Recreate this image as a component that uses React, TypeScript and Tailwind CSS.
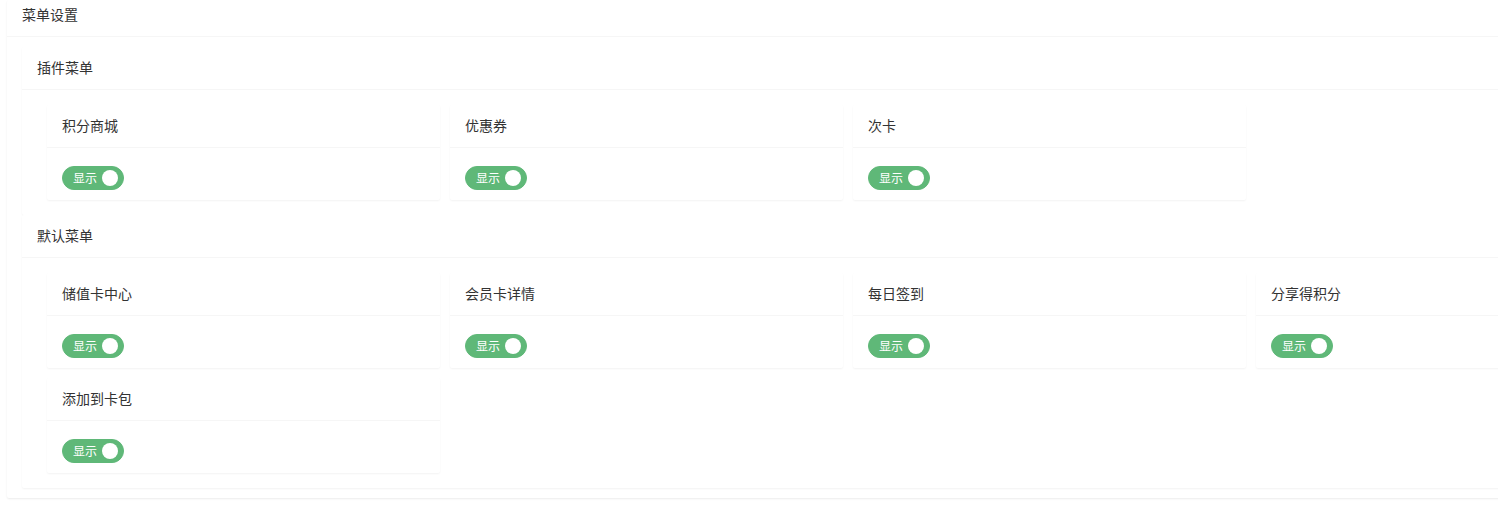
import React from "react";

type Item = { name: string };

const pluginMenus: Item[] = [
  { name: "积分商城" },
  { name: "优惠券" },
  { name: "次卡" },
];

const defaultMenus: Item[] = [
  { name: "储值卡中心" },
  { name: "会员卡详情" },
  { name: "每日签到" },
  { name: "分享得积分" },
  { name: "添加到卡包" },
];

const Switch: React.FC = () => (
  <div className="relative mt-[8px] h-[24px] w-[62px] rounded-[20px] border border-[#5FB878] bg-[#5FB878]">
    <em className="ml-[10px] block text-[12px] not-italic leading-[21px] text-white">显示</em>
    <i className="absolute top-[3px] left-[39px] h-[16px] w-[16px] rounded-full bg-white" />
  </div>
);

const MenuCard: React.FC<{ item: Item }> = ({ item }) => (
  <div className="rounded-[2px] bg-white shadow-[0_1px_2px_0_rgba(0,0,0,0.05)]">
    <div className="h-[43px] border-b border-[#f6f6f6] px-[15px] leading-[40px] text-[14px] text-[#333]">
      {item.name}
    </div>
    <div className="px-[15px] pt-[10px] pb-[10px]">
      <Switch />
    </div>
  </div>
);

const Section: React.FC<{ title: string; items: Item[] }> = ({ title, items }) => (
  <div className="rounded-[2px] bg-white shadow-[0_1px_2px_0_rgba(0,0,0,0.05)]">
    <div className="h-[43px] border-b border-[#f6f6f6] px-[15px] leading-[40px] text-[14px] text-[#333]">
      {title}
    </div>
    <div className="grid grid-cols-[repeat(4,393px)] gap-[10px] pt-[15px] pb-[15px] pl-[25px]">
      {items.map((item) => (
        <MenuCard key={item.name} item={item} />
      ))}
    </div>
  </div>
);

export default function App() {
  return (
    <div
      className="h-[517px] w-[1498px] overflow-hidden bg-white"
      style={{ fontFamily: '"Noto Sans CJK SC", "Noto Sans", sans-serif' }}
    >
      <div className="ml-[7px] w-[1720px] rounded-[2px] bg-white shadow-[0_1px_2px_0_rgba(0,0,0,0.08)]">
        <div className="h-[37px] border-b border-[#f6f6f6] px-[15px] leading-[28px] text-[14px] text-[#333]">
          菜单设置
        </div>
        <div className="px-[15px] py-[10px]">
          <Section title="插件菜单" items={pluginMenus} />
          <Section title="默认菜单" items={defaultMenus} />
        </div>
      </div>
    </div>
  );
}
